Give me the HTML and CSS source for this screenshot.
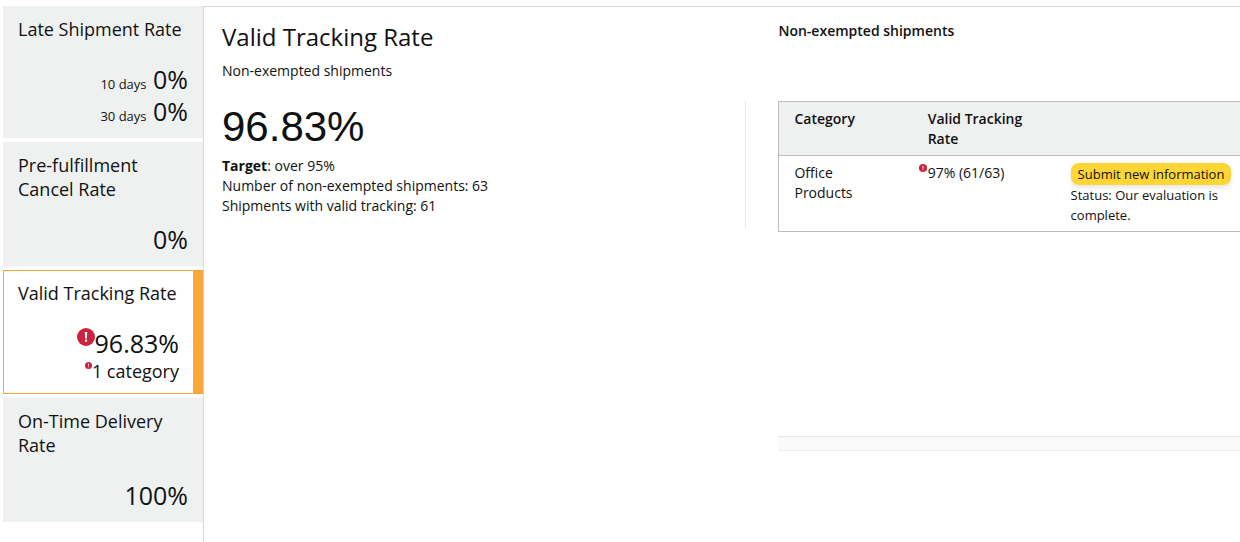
FILE: index.html
```html
<!DOCTYPE html>
<html lang="en">
<head>
    <meta charset="UTF-8">
    <meta name="viewport" content="width=device-width, initial-scale=1.0">
    <title>Valid Tracking Rate</title>
    <link rel="stylesheet" href="styles.css">
</head>
<body>
    <!-- Alert icon shared by the cards and the table -->
    <svg class="icon-defs" width="0" height="0" aria-hidden="true">
        <symbol id="alert" viewBox="0 0 18 18">
            <circle cx="9" cy="9" r="9" fill="#cb223d"/>
            <path d="M7.8 4h2.4l-.3 6.6H8.1z" fill="#fff"/>
            <rect x="7.9" y="11.6" width="2.2" height="2.2" rx=".4" fill="#fff"/>
        </symbol>
    </svg>

    <div class="page">
        <nav class="sidebar">
            <a class="card" href="#late-shipment">
                <span class="card-title">Late Shipment Rate</span>
                <span class="card-value"><small>10 days</small> 0%</span>
                <span class="card-value"><small>30 days</small> 0%</span>
            </a>
            <a class="card" href="#cancel-rate">
                <span class="card-title">Pre-fulfillment Cancel Rate</span>
                <span class="card-value">0%</span>
            </a>
            <a class="card active" href="#valid-tracking" aria-current="page">
                <span class="card-title">Valid Tracking Rate</span>
                <span class="card-value"><svg class="alert-large"><use href="#alert"/></svg>96.83%</span>
                <span class="card-note"><svg class="alert-small"><use href="#alert"/></svg>1 category</span>
            </a>
            <a class="card" href="#on-time-delivery">
                <span class="card-title">On-Time Delivery Rate</span>
                <span class="card-value">100%</span>
            </a>
        </nav>

        <main class="content" id="valid-tracking">
            <section class="summary">
                <header class="section-header">
                    <h1>Valid Tracking Rate</h1>
                    <p>Non-exempted shipments</p>
                </header>
                <div class="summary-body">
                    <div class="rate">96.83%</div>
                    <p><b>Target</b>: over 95%</p>
                    <p>Number of non-exempted shipments: 63</p>
                    <p>Shipments with valid tracking: 61</p>
                </div>
            </section>

            <section class="breakdown">
                <header class="section-header">
                    <h2>Non-exempted shipments</h2>
                </header>
                <div class="table-area">
                    <table class="category-table">
                        <thead>
                            <tr>
                                <th class="col-category">Category</th>
                                <th class="col-rate">Valid Tracking Rate</th>
                                <th class="col-action"></th>
                            </tr>
                        </thead>
                        <tbody>
                            <tr>
                                <td>Office Products</td>
                                <td><svg class="alert-cell"><use href="#alert"/></svg>97% (61/63)</td>
                                <td class="action">
                                    <button type="button" class="submit-button">Submit new information</button>
                                    <p>Status: Our evaluation is complete.</p>
                                </td>
                            </tr>
                        </tbody>
                    </table>
                </div>
                <div class="scroll-track"></div>
            </section>
        </main>
    </div>
</body>
</html>
```

FILE: styles.css
```css
* {
    box-sizing: border-box;
}

body {
    margin: 0;
    font-family: "Open Sans", "Noto Sans", sans-serif;
    font-size: 14px;
    line-height: 20px;
    color: #0f1111;
    background-color: #fff;
    overflow-x: hidden;
}

h1, h2, p {
    margin: 0;
}

.icon-defs {
    display: none;
}

.page {
    display: flex;
    min-height: 100vh;
    padding: 6px 0 0 3px;
}

/* Metric cards */
.sidebar {
    display: flex;
    flex-direction: column;
    flex: 0 0 200px;
    gap: 4px;
}

.card {
    display: flex;
    flex-direction: column;
    padding: 11px 15px;
    background-color: #eff1f1;
    color: inherit;
    text-decoration: none;
}

.card.active {
    padding: 10px 14px;
    border: 1px solid #fba73a;
    border-right-width: 10px;
    background-color: #fff;
}

.card-title {
    margin-bottom: 22px;
    font-size: 18px;
    line-height: 24px;
}

.card-value {
    font-size: 25px;
    line-height: 32px;
    text-align: right;
}

.card-value small {
    font-size: 13px;
    line-height: 1;
}

.card-note {
    font-size: 18px;
    line-height: 24px;
    text-align: right;
}

.alert-large {
    width: 18px;
    height: 18px;
    vertical-align: 7px;
}

.alert-small {
    width: 7px;
    height: 7px;
    vertical-align: 9px;
}

/* Main area */
.content {
    flex: 1;
    display: grid;
    grid-template-columns: minmax(0, 25fr) minmax(0, 22fr);
    column-gap: 32px;
    padding-left: 18px;
    border-top: 1px solid #d5d9d9;
    border-left: 1px solid #d5d9d9;
}

.section-header {
    height: 94px;
    padding-top: 14px;
}

h1 {
    margin-bottom: 8px;
    font-size: 24px;
    font-weight: 400;
    line-height: 32px;
}

h2 {
    font-size: 14px;
    font-weight: 600;
    line-height: 20px;
}

.summary-body {
    padding-bottom: 12px;
    border-right: 1px solid #e7e7e7;
}

.rate {
    margin-bottom: 3px;
    font-family: "Liberation Sans", Arial, sans-serif;
    font-size: 42px;
    line-height: 52px;
}

.table-area {
    min-height: 335px;
}

.category-table {
    width: 100%;
    table-layout: fixed;
    border-collapse: collapse;
    border: 1px solid #bbbfbf;
    border-right: none;
}

.category-table th {
    padding: 7px 22px 6px 15px;
    font-weight: 600;
    text-align: left;
    vertical-align: top;
    background-color: #eff1f1;
    border-bottom: 1px solid #bbbfbf;
}

.category-table td {
    padding: 7px 22px 6px 15px;
    vertical-align: top;
}

.category-table td.action {
    padding-right: 8px;
    font-size: 13px;
}

.col-category {
    width: 29%;
}

.col-rate {
    width: 31%;
}

.alert-cell {
    width: 8px;
    height: 8px;
    margin-left: -9px;
    margin-right: 1px;
    vertical-align: 6px;
}

.submit-button {
    display: block;
    height: 22px;
    padding: 0 7px;
    border: none;
    border-radius: 8px;
    background-color: #ffd636;
    box-shadow: 0 2px 5px rgba(15, 17, 17, 0.12);
    font: inherit;
    color: inherit;
    white-space: nowrap;
}

.scroll-track {
    height: 15px;
    background-color: #fafafa;
    border-top: 1px solid #e6e6e6;
    border-bottom: 1px solid #ececec;
}
```
